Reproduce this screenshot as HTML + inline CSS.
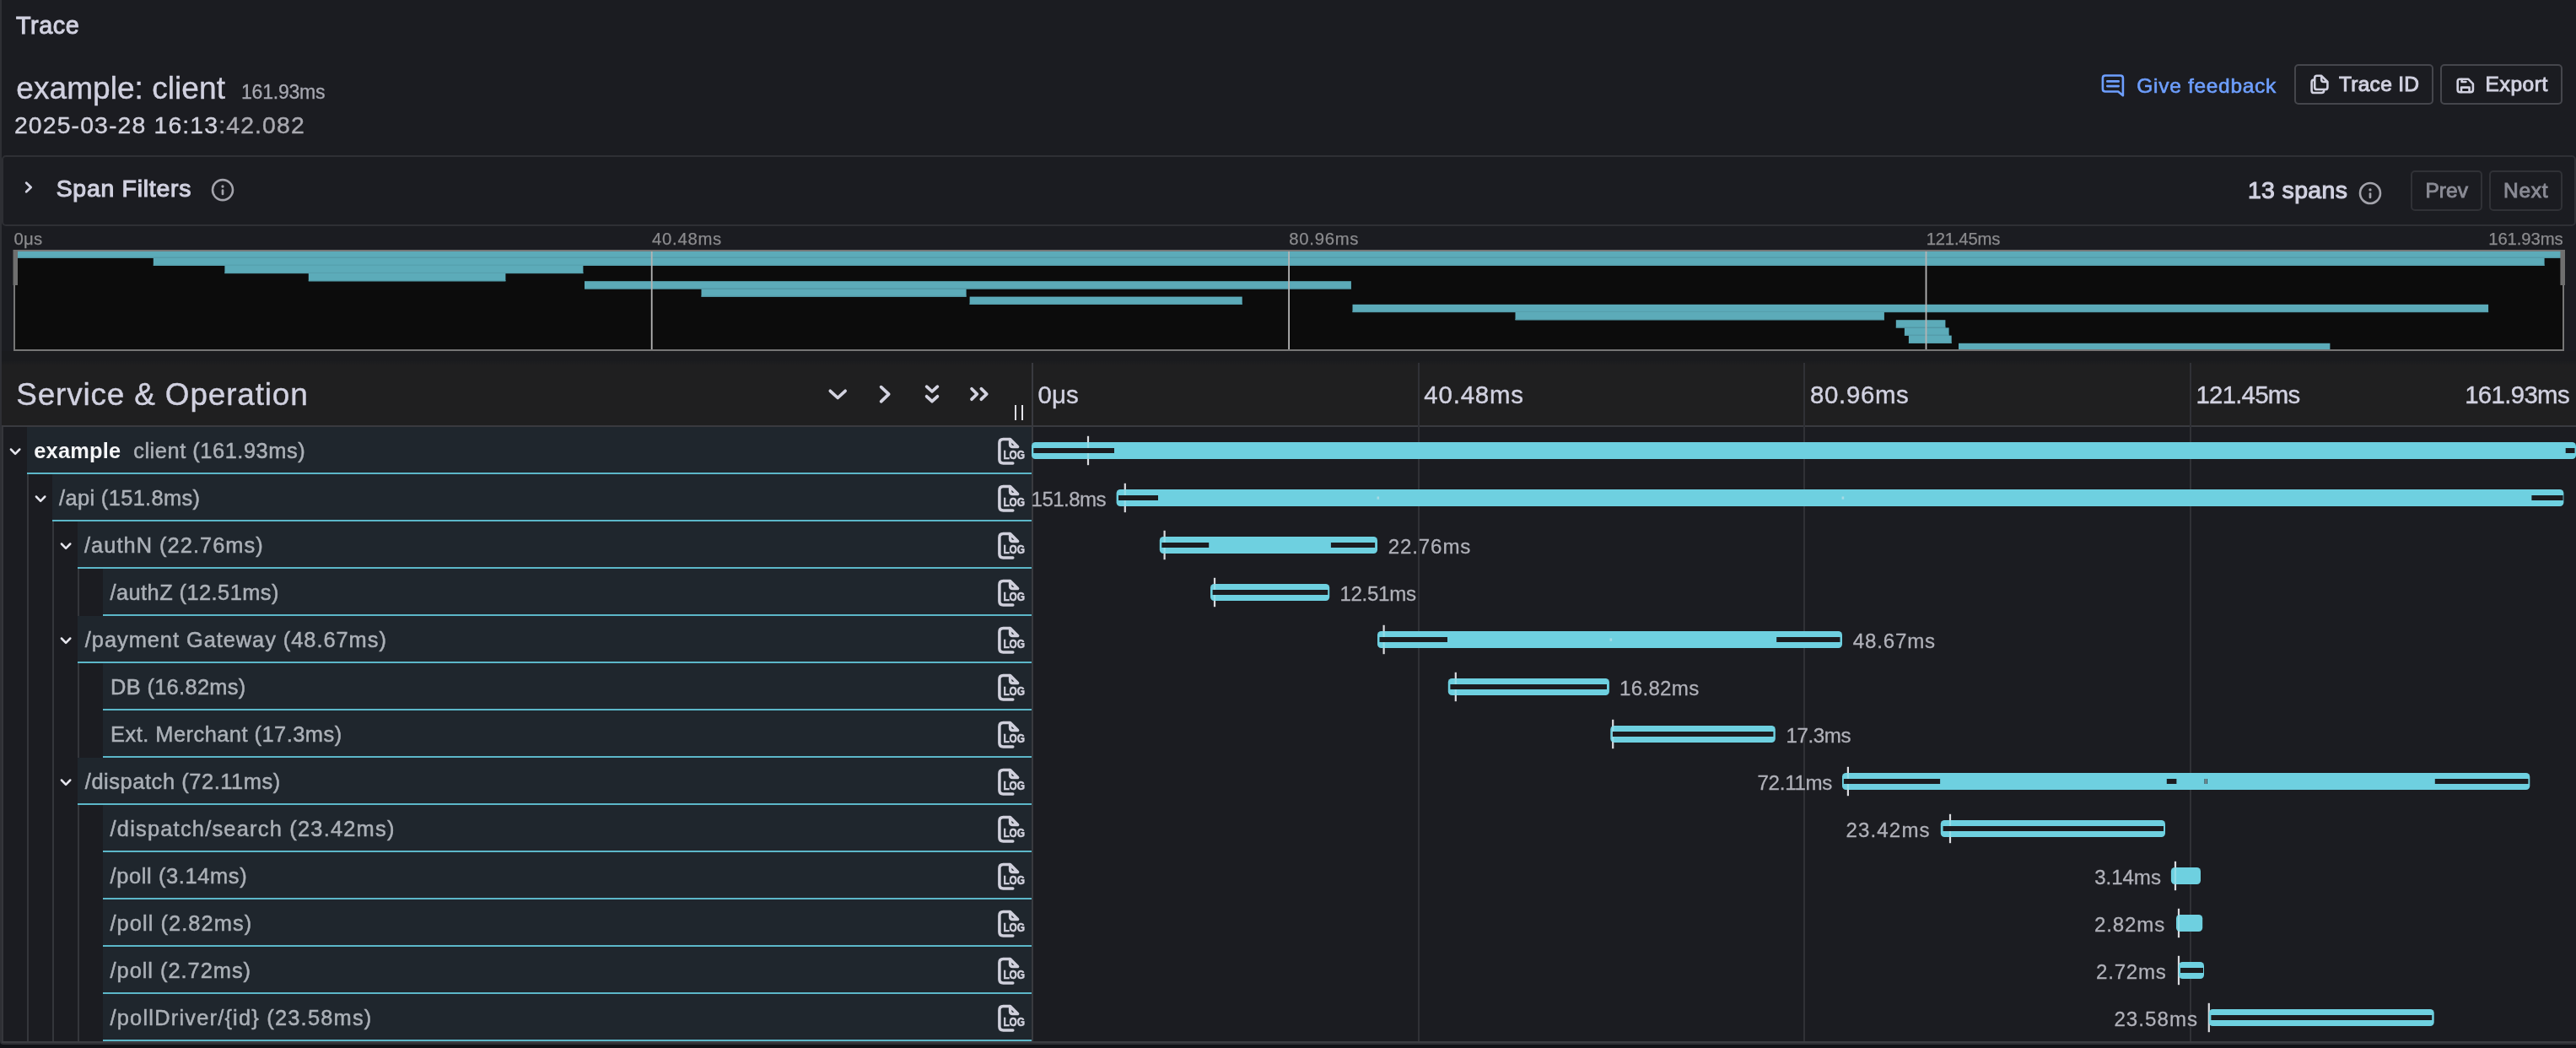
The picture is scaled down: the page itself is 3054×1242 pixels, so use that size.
<!DOCTYPE html>
<html lang="en">
<head>
<meta charset="utf-8">
<title>Trace</title>
<style>
html,body{margin:0;padding:0}
body{width:3054px;height:1242px;overflow:hidden;background:#111217;font-family:"Liberation Sans", sans-serif;position:relative}
main{position:absolute;left:0;top:0;width:3054px;height:1242px;overflow:hidden;will-change:transform}
header,section,nav,.row,.cell,.hd{display:block;position:static;margin:0;padding:0}
.t,.b,svg{position:absolute}
.t{white-space:pre;margin:0;padding:0;font-weight:400;text-decoration:none;display:block}
.b{box-sizing:border-box;margin:0;padding:0}
button.b{background:none;font:inherit;color:inherit;border-radius:5px;overflow:visible;appearance:none;-webkit-appearance:none;text-align:left}
button.act{border:2px solid #45464c}
button.nav{border:2px solid #303136}
svg{overflow:visible}
.panel{background:#1b1c21;border:2px solid #2e2f34;border-radius:4px}
.filters{border:2px solid #2e2f34;border-radius:5px}
.nameblock{background:#1f262d;border-bottom:2px solid #5cb7c9;height:56px}
.guide{background:#34363b;width:2px;height:56px}
.grid{background:#303136;width:2px;top:430px;height:804px}

</style>
</head>
<body>
<main>
<div class="b panel" style="left:0px;top:-20px;width:3094px;height:1258px;"></div>
<header>
<h2 class="t" style="left:18.9px;top:16.00px;font-size:28.8px;line-height:28.8px;color:#d1d1e0;letter-spacing:0.611px;-webkit-text-stroke:1.0px #d1d1e0;">Trace</h2>
<h1 class="t" style="left:19.3px;top:86.00px;font-size:37.0px;line-height:37.0px;color:#d1d1e0;letter-spacing:0.060px;-webkit-text-stroke:0.4px #d1d1e0;">example: client</h1>
<span class="t" style="left:286.0px;top:98.00px;font-size:23.1px;line-height:23.1px;color:#a6a7b0;letter-spacing:-0.253px;-webkit-text-stroke:0.3px #a6a7b0;">161.93ms</span>
<time class="t" datetime="2025-03-28T16:13:42.082" style="left:16.9px;top:134.00px;font-size:28.4px;line-height:28.4px;color:#d0d0dc;letter-spacing:1.135px;-webkit-text-stroke:0.4px #d0d0dc;">2025-03-28 16:13<span style="color:#a9a9b0;-webkit-text-stroke:0.4px #a9a9b0">:42.082</span></time>
<nav>
<svg style="left:2489px;top:85px" width="32" height="32" viewBox="2489 85 32 32" fill="none"><g stroke="#6e9fff" stroke-width="2.6" stroke-linejoin="round" stroke-linecap="round"><path d="M2495.9,89.5 H2513.9 Q2516.9,89.5 2516.9,92.5 V113.3 L2511.2,108.5 H2495.9 Q2492.9,108.5 2492.9,105.5 V92.5 Q2492.9,89.5 2495.9,89.5 Z"/><path d="M2498.3,96.4 H2511.7 M2498.3,102.1 H2511.7"/></g></svg>
<a class="t" style="left:2533.3px;top:90.00px;font-size:24.5px;line-height:24.5px;color:#6e9fff;letter-spacing:0.698px;-webkit-text-stroke:0.6px #6e9fff;">Give feedback</a>
<button class="b act" style="left:2720px;top:76px;width:165px;height:48px;"><svg style="left:14px;top:8px" width="28" height="28" viewBox="2736 86 28 28" fill="none"><g stroke="#d1d1e0" stroke-width="2.6" stroke-linejoin="round" stroke-linecap="round"><path d="M2751.5,89.8 H2746.8 Q2744.2,89.8 2744.2,92.4 V103.4 Q2744.2,106 2746.8,106 H2756.8 Q2759.4,106 2759.4,103.4 V97 L2752.2,89.8 V94.6 Q2752.2,97 2754.6,97 H2759.4"/><path d="M2743.6,94.5 Q2740.6,94.5 2740.6,97.3 V107.4 Q2740.6,110 2743.4,110 H2752.4 Q2755.2,110 2755.2,107.6"/></g></svg><span class="t" style="left:50.9px;top:10.00px;font-size:24.5px;line-height:24.5px;color:#d1d1e0;letter-spacing:0.296px;-webkit-text-stroke:1.0px #d1d1e0;">Trace ID</span></button>
<button class="b act" style="left:2893px;top:76px;width:145px;height:48px;"><svg style="left:14px;top:8px" width="28" height="28" viewBox="2909 86 28 28" fill="none"><g stroke="#d1d1e0" stroke-width="2.6" stroke-linejoin="round" stroke-linecap="round"><path d="M2916.3,93.7 H2926.2 L2931.9,99.4 V106.6 Q2931.9,109.2 2929.3,109.2 H2916.3 Q2913.7,109.2 2913.7,106.6 V96.3 Q2913.7,93.7 2916.3,93.7 Z"/><path d="M2918,109 V103.6 H2927.6 V109 M2918.6,94 V97 H2923.4"/></g></svg><span class="t" style="left:51.6px;top:10.00px;font-size:24.5px;line-height:24.5px;color:#d1d1e0;letter-spacing:0.598px;-webkit-text-stroke:1.0px #d1d1e0;">Export</span></button>
</nav>
</header>
<section>
<div class="b filters" style="left:2px;top:184px;width:3052px;height:84px;"></div>
<svg style="left:24px;top:210px" width="24" height="24" viewBox="24 210 24 24" fill="none"><polyline points="31.2,216.8 36.7,222 31.2,227.2" stroke="#d1d1e0" stroke-width="2.8" stroke-linecap="round" stroke-linejoin="round"/></svg>
<h3 class="t" style="left:66.7px;top:209.00px;font-size:28.4px;line-height:28.4px;color:#d1d1e0;letter-spacing:0.743px;-webkit-text-stroke:1.1px #d1d1e0;">Span Filters</h3>
<svg style="left:248px;top:209px" width="32" height="32" viewBox="248 209 32 32" fill="none"><circle cx="264.0" cy="225.1" r="12" stroke="#a3a3ab" stroke-width="2.6"/><rect x="262.65" y="224.29999999999998" width="2.7" height="7" rx="1.3" fill="#a3a3ab"/><circle cx="264.0" cy="221.0" r="1.65" fill="#a3a3ab"/></svg>
<span class="t" style="left:2664.9px;top:211.00px;font-size:28.4px;line-height:28.4px;color:#d1d1e0;letter-spacing:0.396px;-webkit-text-stroke:1.1px #d1d1e0;">13 spans</span>
<svg style="left:2794px;top:213px" width="32" height="32" viewBox="2794 213 32 32" fill="none"><circle cx="2810.0" cy="229.0" r="12" stroke="#a3a3ab" stroke-width="2.6"/><rect x="2808.65" y="228.2" width="2.7" height="7" rx="1.3" fill="#a3a3ab"/><circle cx="2810.0" cy="224.9" r="1.65" fill="#a3a3ab"/></svg>
<button class="b nav" style="left:2858px;top:202px;width:85px;height:48px;"><span class="t" style="left:15.5px;top:10.00px;font-size:24.5px;line-height:24.5px;color:#8a8b95;letter-spacing:0.027px;-webkit-text-stroke:0.9px #8a8b95;">Prev</span></button>
<button class="b nav" style="left:2951px;top:202px;width:87px;height:48px;"><span class="t" style="left:15.0px;top:10.00px;font-size:24.5px;line-height:24.5px;color:#8a8b95;letter-spacing:0.752px;-webkit-text-stroke:0.9px #8a8b95;">Next</span></button>
</section>
<section>
<span class="t" style="left:16.5px;top:273.00px;font-size:20.3px;line-height:20.3px;color:#8b8b8e;letter-spacing:0.264px;-webkit-text-stroke:0.25px #8b8b8e;">0μs</span>
<span class="t" style="left:773.0px;top:273.00px;font-size:20.3px;line-height:20.3px;color:#8b8b8e;letter-spacing:0.729px;-webkit-text-stroke:0.25px #8b8b8e;">40.48ms</span>
<span class="t" style="left:1528.3px;top:273.00px;font-size:20.3px;line-height:20.3px;color:#8b8b8e;letter-spacing:0.729px;-webkit-text-stroke:0.25px #8b8b8e;">80.96ms</span>
<span class="t" style="left:2283.7px;top:273.00px;font-size:20.3px;line-height:20.3px;color:#8b8b8e;letter-spacing:-0.197px;-webkit-text-stroke:0.25px #8b8b8e;">121.45ms</span>
<span class="t" style="left:2950.2px;top:273.00px;font-size:20.3px;line-height:20.3px;color:#8b8b8e;letter-spacing:-0.072px;-webkit-text-stroke:0.25px #8b8b8e;">161.93ms</span>
<div class="b" style="left:16px;top:296px;width:3024px;height:120px;background:#0c0c0c;"></div>
<svg style="left:14px;top:294px" width="3030" height="124" viewBox="14 294 3030 124" fill="none"><rect x="18.0" y="296.40" width="3020.0" height="9.20" fill="#5cabb9"/><rect x="18.0" y="304.40" width="3020.0" height="1.4" fill="#56a0ad"/><rect x="181.8" y="305.60" width="2834.8" height="9.20" fill="#5cabb9"/><rect x="181.8" y="313.60" width="2834.8" height="1.4" fill="#56a0ad"/><rect x="266.4" y="314.80" width="425.0" height="9.20" fill="#5cabb9"/><rect x="266.4" y="322.80" width="425.0" height="1.4" fill="#56a0ad"/><rect x="365.8" y="324.00" width="233.6" height="9.20" fill="#5cabb9"/><rect x="365.8" y="332.00" width="233.6" height="1.4" fill="#56a0ad"/><rect x="693.0" y="333.20" width="908.9" height="9.20" fill="#5cabb9"/><rect x="693.0" y="341.20" width="908.9" height="1.4" fill="#56a0ad"/><rect x="831.5" y="342.40" width="314.1" height="9.20" fill="#5cabb9"/><rect x="831.5" y="350.40" width="314.1" height="1.4" fill="#56a0ad"/><rect x="1149.6" y="351.60" width="323.1" height="9.20" fill="#5cabb9"/><rect x="1149.6" y="359.60" width="323.1" height="1.4" fill="#56a0ad"/><rect x="1603.5" y="360.80" width="1346.6" height="9.20" fill="#5cabb9"/><rect x="1603.5" y="368.80" width="1346.6" height="1.4" fill="#56a0ad"/><rect x="1796.5" y="370.00" width="437.4" height="9.20" fill="#5cabb9"/><rect x="1796.5" y="378.00" width="437.4" height="1.4" fill="#56a0ad"/><rect x="2247.8" y="379.20" width="58.6" height="9.20" fill="#5cabb9"/><rect x="2247.8" y="387.20" width="58.6" height="1.4" fill="#56a0ad"/><rect x="2257.9" y="388.40" width="52.7" height="9.20" fill="#5cabb9"/><rect x="2257.9" y="396.40" width="52.7" height="1.4" fill="#56a0ad"/><rect x="2262.9" y="397.60" width="50.8" height="9.20" fill="#5cabb9"/><rect x="2262.9" y="405.60" width="50.8" height="1.4" fill="#56a0ad"/><rect x="2322.0" y="406.80" width="440.4" height="9.20" fill="#5cabb9"/><rect x="2322.0" y="414.80" width="440.4" height="1.4" fill="#56a0ad"/><rect x="771.8" y="298" width="1.8" height="116" fill="#b4b4b4"/><rect x="1527.2" y="298" width="1.8" height="116" fill="#b4b4b4"/><rect x="2282.6" y="298" width="1.8" height="116" fill="#b4b4b4"/><rect x="17" y="297" width="3022" height="118" fill="none" stroke="#767676" stroke-width="2"/><rect x="15.5" y="296" width="5.5" height="42" fill="#6f6f6f"/><rect x="3035.4" y="296" width="5.6" height="42" fill="#6f6f6f"/></svg>
</section>
<section>
<div class="b" style="left:2px;top:416px;width:3052px;height:12px;background:#1a1b1e;"></div>
<div class="hd">
<div class="b" style="left:2px;top:428px;width:3052px;height:76px;background:linear-gradient(#1b1c1f,#1f1f20 5px);"></div>
<h3 class="t" style="left:19.3px;top:450.00px;font-size:36.9px;line-height:36.9px;color:#d1d1e0;letter-spacing:0.846px;-webkit-text-stroke:0.4px #d1d1e0;">Service &amp; Operation</h3>
<svg style="left:976px;top:450px" width="244" height="52" viewBox="976 450 244 52" fill="none"><g stroke="#d3d3e0" stroke-width="3.7" stroke-linecap="round" stroke-linejoin="round"><polyline points="984.3,463.3 993.2,471.5 1002.1,463.3"/><polyline points="1044.6,458.6 1053.7,467.2 1044.6,475.8"/><polyline points="1098.6,458.2 1105,464 1111.4,458.2"/><polyline points="1098.6,469.8 1105,475.7 1111.4,469.8"/><polyline points="1152,460.7 1158.4,467 1152,473.2"/><polyline points="1163.3,460.7 1169.8,467 1163.3,473.2"/></g><rect x="1203" y="480" width="2" height="18" fill="#dcdce2"/><rect x="1211" y="480" width="2" height="18" fill="#e4e4ea"/></svg>
<span class="t" style="left:1230.6px;top:453.00px;font-size:29.4px;line-height:29.4px;color:#d1d1e0;letter-spacing:0.039px;-webkit-text-stroke:0.4px #d1d1e0;">0μs</span>
<span class="t" style="left:1688.3px;top:453.00px;font-size:29.4px;line-height:29.4px;color:#d1d1e0;letter-spacing:0.838px;-webkit-text-stroke:0.4px #d1d1e0;">40.48ms</span>
<span class="t" style="left:2146.0px;top:453.00px;font-size:29.4px;line-height:29.4px;color:#d1d1e0;letter-spacing:0.681px;-webkit-text-stroke:0.4px #d1d1e0;">80.96ms</span>
<span class="t" style="left:2603.5px;top:453.00px;font-size:29.4px;line-height:29.4px;color:#d1d1e0;letter-spacing:-0.772px;-webkit-text-stroke:0.4px #d1d1e0;">121.45ms</span>
<span class="t" style="left:2922.2px;top:453.00px;font-size:29.4px;line-height:29.4px;color:#d1d1e0;letter-spacing:-0.660px;-webkit-text-stroke:0.4px #d1d1e0;">161.93ms</span>
</div>
<div class="b" style="left:2px;top:505px;width:2px;height:731px;background:#35363b;"></div>
<div class="b" style="left:2px;top:504px;width:3052px;height:2px;background:#393a3f;"></div>
<div class="b grid" style="left:1681px"></div>
<div class="b grid" style="left:2138px"></div>
<div class="b grid" style="left:2596px"></div>
<div class="b" style="left:1223px;top:430px;width:2px;height:804px;background:#393a3f;"></div>
<div class="row">
<div class="cell">
<svg style="left:6px;top:522px" width="24" height="24" viewBox="6 522 24 24" fill="none"><polyline points="12.9,532.5 18.1,537.8 23.3,532.5" stroke="#e6e6ee" stroke-width="2.5" stroke-linecap="round" stroke-linejoin="round"/></svg>
<div class="b nameblock" style="left:32px;top:506px;width:1191px"></div>
<b class="t" style="left:40.3px;top:522.00px;font-size:25.4px;line-height:25.4px;color:#f4f5f7;letter-spacing:0.196px;font-weight:700;">example</b>
<span class="t" style="left:158.2px;top:522.00px;font-size:25.4px;line-height:25.4px;color:#abb0b7;letter-spacing:0.544px;-webkit-text-stroke:0.5px #abb0b7;">client (161.93ms)</span>
<svg style="left:1180px;top:514px" width="40" height="40" viewBox="1180 514 40 40" fill="none"><g stroke="#d0d0dc" stroke-width="3.5" stroke-linejoin="round" stroke-linecap="round"><path d="M1200.8,549 H1189.4 Q1184.9,549 1184.9,544.5 V525 Q1184.9,520.5 1189.4,520.5 H1197.6 L1206.6,529.6 H1200.6 Q1197.6,529.6 1197.6,526.6 V520.5"/></g><text x="1189.4" y="544.4" font-family="Liberation Sans, sans-serif" font-weight="700" font-size="14.8" fill="#d0d0dc" stroke="#d0d0dc" stroke-width="0.6" textLength="25.6" lengthAdjust="spacingAndGlyphs">LOG</text></svg>
</div>
<div class="cell">
<svg style="left:1223px;top:506px" width="1831" height="56" viewBox="1223 506 1831 56" fill="none"><rect x="1288.9" y="516.8" width="2.2" height="34.4" fill="#dadade"/><rect x="1223.0" y="524" width="1831.0" height="20" rx="4.5" fill="#6ed0e0"/><rect x="1288.9" y="524" width="2.2" height="20" fill="#ffffff" fill-opacity="0.25"/><rect x="1225.3" y="531" width="95.7" height="6" fill="#1b1c20"/><rect x="3041.7" y="531" width="10.8" height="6" fill="#1b1c20"/></svg>
</div>
</div>
<div class="row">
<div class="cell">
<i class="b guide" style="left:32px;top:562px"></i>
<svg style="left:36px;top:578px" width="24" height="24" viewBox="36 578 24 24" fill="none"><polyline points="42.9,588.5 48.1,593.8 53.3,588.5" stroke="#e6e6ee" stroke-width="2.5" stroke-linecap="round" stroke-linejoin="round"/></svg>
<div class="b nameblock" style="left:62px;top:562px;width:1161px"></div>
<span class="t" style="left:70.1px;top:578.00px;font-size:25.4px;line-height:25.4px;color:#abb0b7;letter-spacing:0.357px;-webkit-text-stroke:0.5px #abb0b7;">/api (151.8ms)</span>
<svg style="left:1180px;top:570px" width="40" height="40" viewBox="1180 514 40 40" fill="none"><g stroke="#d0d0dc" stroke-width="3.5" stroke-linejoin="round" stroke-linecap="round"><path d="M1200.8,549 H1189.4 Q1184.9,549 1184.9,544.5 V525 Q1184.9,520.5 1189.4,520.5 H1197.6 L1206.6,529.6 H1200.6 Q1197.6,529.6 1197.6,526.6 V520.5"/></g><text x="1189.4" y="544.4" font-family="Liberation Sans, sans-serif" font-weight="700" font-size="14.8" fill="#d0d0dc" stroke="#d0d0dc" stroke-width="0.6" textLength="25.6" lengthAdjust="spacingAndGlyphs">LOG</text></svg>
</div>
<div class="cell">
<svg style="left:1223px;top:562px" width="1831" height="56" viewBox="1223 562 1831 56" fill="none"><rect x="1332.7" y="572.8" width="2.2" height="34.4" fill="#dadade"/><rect x="1323.6" y="580" width="1715.8" height="20" rx="4.5" fill="#6ed0e0"/><rect x="1332.7" y="580" width="2.2" height="20" fill="#ffffff" fill-opacity="0.25"/><rect x="1326.0" y="587" width="47.0" height="6" fill="#1b1c20"/><rect x="3001.4" y="587" width="37.2" height="6" fill="#1b1c20"/><rect x="1632.5" y="588.5" width="2.6" height="3.2" fill="#a8dbe4"/><rect x="2183.6" y="588.5" width="2.6" height="3.2" fill="#a8dbe4"/></svg>
<span class="t" style="left:1222.6px;top:580.00px;font-size:24.1px;line-height:24.1px;color:#b0b1b9;letter-spacing:-0.589px;-webkit-text-stroke:0.3px #b0b1b9;">151.8ms</span>
</div>
</div>
<div class="row">
<div class="cell">
<i class="b guide" style="left:32px;top:618px"></i>
<i class="b guide" style="left:62px;top:618px"></i>
<svg style="left:66px;top:634px" width="24" height="24" viewBox="66 634 24 24" fill="none"><polyline points="72.9,644.5 78.1,649.8 83.3,644.5" stroke="#e6e6ee" stroke-width="2.5" stroke-linecap="round" stroke-linejoin="round"/></svg>
<div class="b nameblock" style="left:92px;top:618px;width:1131px"></div>
<span class="t" style="left:100.0px;top:634.00px;font-size:25.4px;line-height:25.4px;color:#abb0b7;letter-spacing:1.033px;-webkit-text-stroke:0.5px #abb0b7;">/authN (22.76ms)</span>
<svg style="left:1180px;top:626px" width="40" height="40" viewBox="1180 514 40 40" fill="none"><g stroke="#d0d0dc" stroke-width="3.5" stroke-linejoin="round" stroke-linecap="round"><path d="M1200.8,549 H1189.4 Q1184.9,549 1184.9,544.5 V525 Q1184.9,520.5 1189.4,520.5 H1197.6 L1206.6,529.6 H1200.6 Q1197.6,529.6 1197.6,526.6 V520.5"/></g><text x="1189.4" y="544.4" font-family="Liberation Sans, sans-serif" font-weight="700" font-size="14.8" fill="#d0d0dc" stroke="#d0d0dc" stroke-width="0.6" textLength="25.6" lengthAdjust="spacingAndGlyphs">LOG</text></svg>
</div>
<div class="cell">
<svg style="left:1223px;top:618px" width="1831" height="56" viewBox="1223 618 1831 56" fill="none"><rect x="1379.5" y="628.8" width="2.2" height="34.4" fill="#dadade"/><rect x="1374.8" y="636" width="258.2" height="20" rx="4.5" fill="#6ed0e0"/><rect x="1379.5" y="636" width="2.2" height="20" fill="#ffffff" fill-opacity="0.25"/><rect x="1377.3" y="643" width="55.9" height="6" fill="#1b1c20"/><rect x="1577.9" y="643" width="52.2" height="6" fill="#1b1c20"/></svg>
<span class="t" style="left:1645.7px;top:636.00px;font-size:24.1px;line-height:24.1px;color:#b0b1b9;letter-spacing:0.883px;-webkit-text-stroke:0.3px #b0b1b9;">22.76ms</span>
</div>
</div>
<div class="row">
<div class="cell">
<i class="b guide" style="left:32px;top:674px"></i>
<i class="b guide" style="left:62px;top:674px"></i>
<i class="b guide" style="left:92px;top:674px"></i>
<div class="b nameblock" style="left:122px;top:674px;width:1101px"></div>
<span class="t" style="left:130.5px;top:690.00px;font-size:25.4px;line-height:25.4px;color:#abb0b7;letter-spacing:0.435px;-webkit-text-stroke:0.5px #abb0b7;">/authZ (12.51ms)</span>
<svg style="left:1180px;top:682px" width="40" height="40" viewBox="1180 514 40 40" fill="none"><g stroke="#d0d0dc" stroke-width="3.5" stroke-linejoin="round" stroke-linecap="round"><path d="M1200.8,549 H1189.4 Q1184.9,549 1184.9,544.5 V525 Q1184.9,520.5 1189.4,520.5 H1197.6 L1206.6,529.6 H1200.6 Q1197.6,529.6 1197.6,526.6 V520.5"/></g><text x="1189.4" y="544.4" font-family="Liberation Sans, sans-serif" font-weight="700" font-size="14.8" fill="#d0d0dc" stroke="#d0d0dc" stroke-width="0.6" textLength="25.6" lengthAdjust="spacingAndGlyphs">LOG</text></svg>
</div>
<div class="cell">
<svg style="left:1223px;top:674px" width="1831" height="56" viewBox="1223 674 1831 56" fill="none"><rect x="1438.9" y="684.8" width="2.2" height="34.4" fill="#dadade"/><rect x="1435.0" y="692" width="141.2" height="20" rx="4.5" fill="#6ed0e0"/><rect x="1438.9" y="692" width="2.2" height="20" fill="#ffffff" fill-opacity="0.25"/><rect x="1437.6" y="699" width="136.6" height="6" fill="#1b1c20"/></svg>
<span class="t" style="left:1588.4px;top:692.00px;font-size:24.1px;line-height:24.1px;color:#b0b1b9;letter-spacing:-0.303px;-webkit-text-stroke:0.3px #b0b1b9;">12.51ms</span>
</div>
</div>
<div class="row">
<div class="cell">
<i class="b guide" style="left:32px;top:730px"></i>
<i class="b guide" style="left:62px;top:730px"></i>
<svg style="left:66px;top:746px" width="24" height="24" viewBox="66 746 24 24" fill="none"><polyline points="72.9,756.5 78.1,761.8 83.3,756.5" stroke="#e6e6ee" stroke-width="2.5" stroke-linecap="round" stroke-linejoin="round"/></svg>
<div class="b nameblock" style="left:92px;top:730px;width:1131px"></div>
<span class="t" style="left:100.8px;top:746.00px;font-size:25.4px;line-height:25.4px;color:#abb0b7;letter-spacing:0.960px;-webkit-text-stroke:0.5px #abb0b7;">/payment Gateway (48.67ms)</span>
<svg style="left:1180px;top:738px" width="40" height="40" viewBox="1180 514 40 40" fill="none"><g stroke="#d0d0dc" stroke-width="3.5" stroke-linejoin="round" stroke-linecap="round"><path d="M1200.8,549 H1189.4 Q1184.9,549 1184.9,544.5 V525 Q1184.9,520.5 1189.4,520.5 H1197.6 L1206.6,529.6 H1200.6 Q1197.6,529.6 1197.6,526.6 V520.5"/></g><text x="1189.4" y="544.4" font-family="Liberation Sans, sans-serif" font-weight="700" font-size="14.8" fill="#d0d0dc" stroke="#d0d0dc" stroke-width="0.6" textLength="25.6" lengthAdjust="spacingAndGlyphs">LOG</text></svg>
</div>
<div class="cell">
<svg style="left:1223px;top:730px" width="1831" height="56" viewBox="1223 730 1831 56" fill="none"><rect x="1639.5" y="740.8" width="2.2" height="34.4" fill="#dadade"/><rect x="1633.0" y="748" width="551.0" height="20" rx="4.5" fill="#6ed0e0"/><rect x="1639.5" y="748" width="2.2" height="20" fill="#ffffff" fill-opacity="0.25"/><rect x="1635.5" y="755" width="80.5" height="6" fill="#1b1c20"/><rect x="2106.2" y="755" width="75.3" height="6" fill="#1b1c20"/><rect x="1908.5" y="756.5" width="2.6" height="3.2" fill="#a8dbe4"/></svg>
<span class="t" style="left:2196.7px;top:748.00px;font-size:24.1px;line-height:24.1px;color:#b0b1b9;letter-spacing:0.840px;-webkit-text-stroke:0.3px #b0b1b9;">48.67ms</span>
</div>
</div>
<div class="row">
<div class="cell">
<i class="b guide" style="left:32px;top:786px"></i>
<i class="b guide" style="left:62px;top:786px"></i>
<i class="b guide" style="left:92px;top:786px"></i>
<div class="b nameblock" style="left:122px;top:786px;width:1101px"></div>
<span class="t" style="left:131.1px;top:802.00px;font-size:25.4px;line-height:25.4px;color:#abb0b7;letter-spacing:0.323px;-webkit-text-stroke:0.5px #abb0b7;">DB (16.82ms)</span>
<svg style="left:1180px;top:794px" width="40" height="40" viewBox="1180 514 40 40" fill="none"><g stroke="#d0d0dc" stroke-width="3.5" stroke-linejoin="round" stroke-linecap="round"><path d="M1200.8,549 H1189.4 Q1184.9,549 1184.9,544.5 V525 Q1184.9,520.5 1189.4,520.5 H1197.6 L1206.6,529.6 H1200.6 Q1197.6,529.6 1197.6,526.6 V520.5"/></g><text x="1189.4" y="544.4" font-family="Liberation Sans, sans-serif" font-weight="700" font-size="14.8" fill="#d0d0dc" stroke="#d0d0dc" stroke-width="0.6" textLength="25.6" lengthAdjust="spacingAndGlyphs">LOG</text></svg>
</div>
<div class="cell">
<svg style="left:1223px;top:786px" width="1831" height="56" viewBox="1223 786 1831 56" fill="none"><rect x="1724.7" y="796.8" width="2.2" height="34.4" fill="#dadade"/><rect x="1716.8" y="804" width="191.1" height="20" rx="4.5" fill="#6ed0e0"/><rect x="1724.7" y="804" width="2.2" height="20" fill="#ffffff" fill-opacity="0.25"/><rect x="1719.4" y="811" width="185.6" height="6" fill="#1b1c20"/></svg>
<span class="t" style="left:1920.0px;top:804.00px;font-size:24.1px;line-height:24.1px;color:#b0b1b9;letter-spacing:0.297px;-webkit-text-stroke:0.3px #b0b1b9;">16.82ms</span>
</div>
</div>
<div class="row">
<div class="cell">
<i class="b guide" style="left:32px;top:842px"></i>
<i class="b guide" style="left:62px;top:842px"></i>
<i class="b guide" style="left:92px;top:842px"></i>
<div class="b nameblock" style="left:122px;top:842px;width:1101px"></div>
<span class="t" style="left:131.1px;top:858.00px;font-size:25.4px;line-height:25.4px;color:#abb0b7;letter-spacing:0.483px;-webkit-text-stroke:0.5px #abb0b7;">Ext. Merchant (17.3ms)</span>
<svg style="left:1180px;top:850px" width="40" height="40" viewBox="1180 514 40 40" fill="none"><g stroke="#d0d0dc" stroke-width="3.5" stroke-linejoin="round" stroke-linecap="round"><path d="M1200.8,549 H1189.4 Q1184.9,549 1184.9,544.5 V525 Q1184.9,520.5 1189.4,520.5 H1197.6 L1206.6,529.6 H1200.6 Q1197.6,529.6 1197.6,526.6 V520.5"/></g><text x="1189.4" y="544.4" font-family="Liberation Sans, sans-serif" font-weight="700" font-size="14.8" fill="#d0d0dc" stroke="#d0d0dc" stroke-width="0.6" textLength="25.6" lengthAdjust="spacingAndGlyphs">LOG</text></svg>
</div>
<div class="cell">
<svg style="left:1223px;top:842px" width="1831" height="56" viewBox="1223 842 1831 56" fill="none"><rect x="1911.1" y="852.8" width="2.2" height="34.4" fill="#dadade"/><rect x="1909.3" y="860" width="195.5" height="20" rx="4.5" fill="#6ed0e0"/><rect x="1911.1" y="860" width="2.2" height="20" fill="#ffffff" fill-opacity="0.25"/><rect x="1911.9" y="867" width="190.5" height="6" fill="#1b1c20"/></svg>
<span class="t" style="left:2117.5px;top:860.00px;font-size:24.1px;line-height:24.1px;color:#b0b1b9;letter-spacing:-0.386px;-webkit-text-stroke:0.3px #b0b1b9;">17.3ms</span>
</div>
</div>
<div class="row">
<div class="cell">
<i class="b guide" style="left:32px;top:898px"></i>
<i class="b guide" style="left:62px;top:898px"></i>
<svg style="left:66px;top:914px" width="24" height="24" viewBox="66 914 24 24" fill="none"><polyline points="72.9,924.5 78.1,929.8 83.3,924.5" stroke="#e6e6ee" stroke-width="2.5" stroke-linecap="round" stroke-linejoin="round"/></svg>
<div class="b nameblock" style="left:92px;top:898px;width:1131px"></div>
<span class="t" style="left:100.8px;top:914.00px;font-size:25.4px;line-height:25.4px;color:#abb0b7;letter-spacing:0.574px;-webkit-text-stroke:0.5px #abb0b7;">/dispatch (72.11ms)</span>
<svg style="left:1180px;top:906px" width="40" height="40" viewBox="1180 514 40 40" fill="none"><g stroke="#d0d0dc" stroke-width="3.5" stroke-linejoin="round" stroke-linecap="round"><path d="M1200.8,549 H1189.4 Q1184.9,549 1184.9,544.5 V525 Q1184.9,520.5 1189.4,520.5 H1197.6 L1206.6,529.6 H1200.6 Q1197.6,529.6 1197.6,526.6 V520.5"/></g><text x="1189.4" y="544.4" font-family="Liberation Sans, sans-serif" font-weight="700" font-size="14.8" fill="#d0d0dc" stroke="#d0d0dc" stroke-width="0.6" textLength="25.6" lengthAdjust="spacingAndGlyphs">LOG</text></svg>
</div>
<div class="cell">
<svg style="left:1223px;top:898px" width="1831" height="56" viewBox="1223 898 1831 56" fill="none"><rect x="2189.8" y="908.8" width="2.2" height="34.4" fill="#dadade"/><rect x="2184.0" y="916" width="815.3" height="20" rx="4.5" fill="#6ed0e0"/><rect x="2189.8" y="916" width="2.2" height="20" fill="#ffffff" fill-opacity="0.25"/><rect x="2185.9" y="923" width="114.2" height="6" fill="#1b1c20"/><rect x="2568.8" y="923" width="11.6" height="6" fill="#1b1c20"/><rect x="2886.8" y="923" width="110.6" height="6" fill="#1b1c20"/><rect x="2613.6" y="923" width="3.2" height="6" fill="#1b1c20"/><rect x="2614.6" y="923" width="1.2" height="6" fill="#b5dfe8"/></svg>
<span class="t" style="left:2083.5px;top:916.00px;font-size:24.1px;line-height:24.1px;color:#b0b1b9;letter-spacing:-0.289px;-webkit-text-stroke:0.3px #b0b1b9;">72.11ms</span>
</div>
</div>
<div class="row">
<div class="cell">
<i class="b guide" style="left:32px;top:954px"></i>
<i class="b guide" style="left:62px;top:954px"></i>
<i class="b guide" style="left:92px;top:954px"></i>
<div class="b nameblock" style="left:122px;top:954px;width:1101px"></div>
<span class="t" style="left:130.5px;top:970.00px;font-size:25.4px;line-height:25.4px;color:#abb0b7;letter-spacing:1.225px;-webkit-text-stroke:0.5px #abb0b7;">/dispatch/search (23.42ms)</span>
<svg style="left:1180px;top:962px" width="40" height="40" viewBox="1180 514 40 40" fill="none"><g stroke="#d0d0dc" stroke-width="3.5" stroke-linejoin="round" stroke-linecap="round"><path d="M1200.8,549 H1189.4 Q1184.9,549 1184.9,544.5 V525 Q1184.9,520.5 1189.4,520.5 H1197.6 L1206.6,529.6 H1200.6 Q1197.6,529.6 1197.6,526.6 V520.5"/></g><text x="1189.4" y="544.4" font-family="Liberation Sans, sans-serif" font-weight="700" font-size="14.8" fill="#d0d0dc" stroke="#d0d0dc" stroke-width="0.6" textLength="25.6" lengthAdjust="spacingAndGlyphs">LOG</text></svg>
</div>
<div class="cell">
<svg style="left:1223px;top:954px" width="1831" height="56" viewBox="1223 954 1831 56" fill="none"><rect x="2310.9" y="964.8" width="2.2" height="34.4" fill="#dadade"/><rect x="2300.8" y="972" width="266.2" height="20" rx="4.5" fill="#6ed0e0"/><rect x="2310.9" y="972" width="2.2" height="20" fill="#ffffff" fill-opacity="0.25"/><rect x="2303.6" y="979" width="261.4" height="6" fill="#1b1c20"/></svg>
<span class="t" style="left:2188.4px;top:972.00px;font-size:24.1px;line-height:24.1px;color:#b0b1b9;letter-spacing:1.140px;-webkit-text-stroke:0.3px #b0b1b9;">23.42ms</span>
</div>
</div>
<div class="row">
<div class="cell">
<i class="b guide" style="left:32px;top:1010px"></i>
<i class="b guide" style="left:62px;top:1010px"></i>
<i class="b guide" style="left:92px;top:1010px"></i>
<div class="b nameblock" style="left:122px;top:1010px;width:1101px"></div>
<span class="t" style="left:130.5px;top:1026.00px;font-size:25.4px;line-height:25.4px;color:#abb0b7;letter-spacing:0.642px;-webkit-text-stroke:0.5px #abb0b7;">/poll (3.14ms)</span>
<svg style="left:1180px;top:1018px" width="40" height="40" viewBox="1180 514 40 40" fill="none"><g stroke="#d0d0dc" stroke-width="3.5" stroke-linejoin="round" stroke-linecap="round"><path d="M1200.8,549 H1189.4 Q1184.9,549 1184.9,544.5 V525 Q1184.9,520.5 1189.4,520.5 H1197.6 L1206.6,529.6 H1200.6 Q1197.6,529.6 1197.6,526.6 V520.5"/></g><text x="1189.4" y="544.4" font-family="Liberation Sans, sans-serif" font-weight="700" font-size="14.8" fill="#d0d0dc" stroke="#d0d0dc" stroke-width="0.6" textLength="25.6" lengthAdjust="spacingAndGlyphs">LOG</text></svg>
</div>
<div class="cell">
<svg style="left:1223px;top:1010px" width="1831" height="56" viewBox="1223 1010 1831 56" fill="none"><rect x="2577.9" y="1020.8" width="2.2" height="34.4" fill="#dadade"/><rect x="2573.9" y="1028" width="35.1" height="20" rx="4.5" fill="#6ed0e0"/><rect x="2577.9" y="1028" width="2.2" height="20" fill="#ffffff" fill-opacity="0.25"/></svg>
<span class="t" style="left:2483.2px;top:1028.00px;font-size:24.1px;line-height:24.1px;color:#b0b1b9;letter-spacing:-0.053px;-webkit-text-stroke:0.3px #b0b1b9;">3.14ms</span>
</div>
</div>
<div class="row">
<div class="cell">
<i class="b guide" style="left:32px;top:1066px"></i>
<i class="b guide" style="left:62px;top:1066px"></i>
<i class="b guide" style="left:92px;top:1066px"></i>
<div class="b nameblock" style="left:122px;top:1066px;width:1101px"></div>
<span class="t" style="left:130.5px;top:1082.00px;font-size:25.4px;line-height:25.4px;color:#abb0b7;letter-spacing:1.063px;-webkit-text-stroke:0.5px #abb0b7;">/poll (2.82ms)</span>
<svg style="left:1180px;top:1074px" width="40" height="40" viewBox="1180 514 40 40" fill="none"><g stroke="#d0d0dc" stroke-width="3.5" stroke-linejoin="round" stroke-linecap="round"><path d="M1200.8,549 H1189.4 Q1184.9,549 1184.9,544.5 V525 Q1184.9,520.5 1189.4,520.5 H1197.6 L1206.6,529.6 H1200.6 Q1197.6,529.6 1197.6,526.6 V520.5"/></g><text x="1189.4" y="544.4" font-family="Liberation Sans, sans-serif" font-weight="700" font-size="14.8" fill="#d0d0dc" stroke="#d0d0dc" stroke-width="0.6" textLength="25.6" lengthAdjust="spacingAndGlyphs">LOG</text></svg>
</div>
<div class="cell">
<svg style="left:1223px;top:1066px" width="1831" height="56" viewBox="1223 1066 1831 56" fill="none"><rect x="2581.9" y="1076.8" width="2.2" height="34.4" fill="#dadade"/><rect x="2580.0" y="1084" width="31.2" height="20" rx="4.5" fill="#6ed0e0"/><rect x="2581.9" y="1084" width="2.2" height="20" fill="#ffffff" fill-opacity="0.25"/></svg>
<span class="t" style="left:2482.9px;top:1084.00px;font-size:24.1px;line-height:24.1px;color:#b0b1b9;letter-spacing:0.897px;-webkit-text-stroke:0.3px #b0b1b9;">2.82ms</span>
</div>
</div>
<div class="row">
<div class="cell">
<i class="b guide" style="left:32px;top:1122px"></i>
<i class="b guide" style="left:62px;top:1122px"></i>
<i class="b guide" style="left:92px;top:1122px"></i>
<div class="b nameblock" style="left:122px;top:1122px;width:1101px"></div>
<span class="t" style="left:130.5px;top:1138.00px;font-size:25.4px;line-height:25.4px;color:#abb0b7;letter-spacing:0.978px;-webkit-text-stroke:0.5px #abb0b7;">/poll (2.72ms)</span>
<svg style="left:1180px;top:1130px" width="40" height="40" viewBox="1180 514 40 40" fill="none"><g stroke="#d0d0dc" stroke-width="3.5" stroke-linejoin="round" stroke-linecap="round"><path d="M1200.8,549 H1189.4 Q1184.9,549 1184.9,544.5 V525 Q1184.9,520.5 1189.4,520.5 H1197.6 L1206.6,529.6 H1200.6 Q1197.6,529.6 1197.6,526.6 V520.5"/></g><text x="1189.4" y="544.4" font-family="Liberation Sans, sans-serif" font-weight="700" font-size="14.8" fill="#d0d0dc" stroke="#d0d0dc" stroke-width="0.6" textLength="25.6" lengthAdjust="spacingAndGlyphs">LOG</text></svg>
</div>
<div class="cell">
<svg style="left:1223px;top:1122px" width="1831" height="56" viewBox="1223 1122 1831 56" fill="none"><rect x="2581.9" y="1132.8" width="2.2" height="34.4" fill="#dadade"/><rect x="2583.0" y="1140" width="30.0" height="20" rx="4.5" fill="#6ed0e0"/><rect x="2585.0" y="1147" width="27.0" height="6" fill="#1b1c20"/></svg>
<span class="t" style="left:2485.0px;top:1140.00px;font-size:24.1px;line-height:24.1px;color:#b0b1b9;letter-spacing:0.781px;-webkit-text-stroke:0.3px #b0b1b9;">2.72ms</span>
</div>
</div>
<div class="row">
<div class="cell">
<i class="b guide" style="left:32px;top:1178px"></i>
<i class="b guide" style="left:62px;top:1178px"></i>
<i class="b guide" style="left:92px;top:1178px"></i>
<div class="b nameblock" style="left:122px;top:1178px;width:1101px"></div>
<span class="t" style="left:130.5px;top:1194.00px;font-size:25.4px;line-height:25.4px;color:#abb0b7;letter-spacing:1.215px;-webkit-text-stroke:0.5px #abb0b7;">/pollDriver/{id} (23.58ms)</span>
<svg style="left:1180px;top:1186px" width="40" height="40" viewBox="1180 514 40 40" fill="none"><g stroke="#d0d0dc" stroke-width="3.5" stroke-linejoin="round" stroke-linecap="round"><path d="M1200.8,549 H1189.4 Q1184.9,549 1184.9,544.5 V525 Q1184.9,520.5 1189.4,520.5 H1197.6 L1206.6,529.6 H1200.6 Q1197.6,529.6 1197.6,526.6 V520.5"/></g><text x="1189.4" y="544.4" font-family="Liberation Sans, sans-serif" font-weight="700" font-size="14.8" fill="#d0d0dc" stroke="#d0d0dc" stroke-width="0.6" textLength="25.6" lengthAdjust="spacingAndGlyphs">LOG</text></svg>
</div>
<div class="cell">
<svg style="left:1223px;top:1178px" width="1831" height="56" viewBox="1223 1178 1831 56" fill="none"><rect x="2617.7" y="1188.8" width="2.2" height="34.4" fill="#dadade"/><rect x="2618.8" y="1196" width="266.9" height="20" rx="4.5" fill="#6ed0e0"/><rect x="2621.4" y="1203" width="261.8" height="6" fill="#1b1c20"/></svg>
<span class="t" style="left:2506.4px;top:1196.00px;font-size:24.1px;line-height:24.1px;color:#b0b1b9;letter-spacing:1.040px;-webkit-text-stroke:0.3px #b0b1b9;">23.58ms</span>
</div>
</div>
<div class="b" style="left:2px;top:1234px;width:3054px;height:2px;background:#3b3c41;"></div>
</section>
</main>
</body>
</html>
